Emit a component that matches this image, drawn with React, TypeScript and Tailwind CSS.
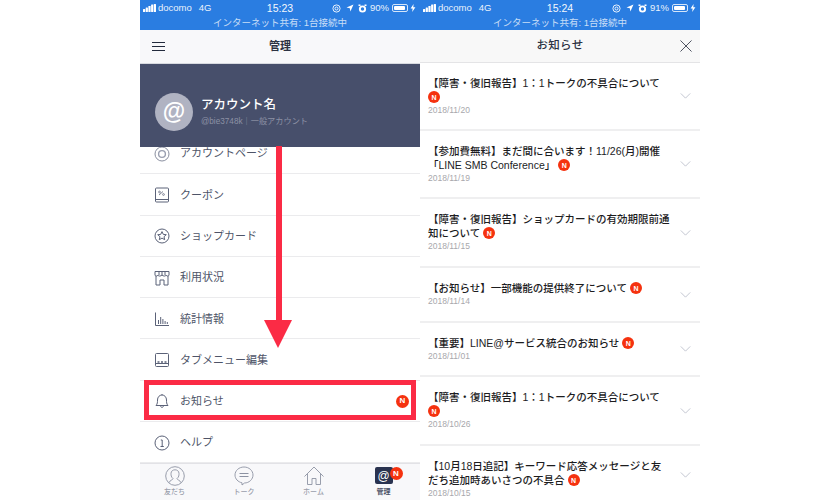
const FONT = "font-['Liberation_Sans','Noto_Sans_CJK_JP',sans-serif]";

function NBadge({ size = "small" }: { size?: "small" | "large" }) {
  return (
    <span
      className={`flex shrink-0 items-center justify-center rounded-full bg-[#f5320f] font-bold leading-none text-white ${
        size === "small" ? "h-[12px] w-[12px] text-[7px]" : "h-[13px] w-[13px] text-[8px]"
      }`}
    >
      N
    </span>
  );
}

function StatusBar({ time, battery }: { time: string; battery: string }) {
  return (
    <div className="h-[30px] shrink-0 bg-[#2a7de1] text-white">
      <div className="flex h-[16px] items-center px-[3px] text-[9.5px] leading-none">
        <div className="flex flex-1 items-center">
          <svg width="13" height="8" viewBox="0 0 13 8" className="mr-[2px]" fill="#fff">
            <rect x="0" y="5" width="2.2" height="3" rx="0.5" />
            <rect x="2.7" y="3.5" width="2.2" height="4.5" rx="0.5" />
            <rect x="5.4" y="2" width="2.2" height="6" rx="0.5" />
            <rect x="8.1" y="0.5" width="2.2" height="7.5" rx="0.5" />
            <rect x="10.8" y="0" width="2.2" height="8" rx="0.5" />
          </svg>
          <span className="opacity-90">docomo</span>
          <span className="ml-[7px] opacity-90">4G</span>
        </div>
        <span className="text-[10.5px] opacity-95">{time}</span>
        <div className="flex flex-1 items-center justify-end">
          <svg width="9" height="9" viewBox="0 0 9 9" fill="none" stroke="#fff">
            <circle cx="4.5" cy="4.5" r="3.6" strokeWidth="0.9" />
            <circle cx="4.5" cy="4.5" r="1.5" strokeWidth="0.9" />
          </svg>
          <svg width="8" height="8" viewBox="0 0 8 8" className="ml-[5px]" fill="#fff">
            <path d="M7.5 0.5 L0.5 3.6 L3.8 4.2 L4.4 7.5 Z" />
          </svg>
          <svg width="9" height="9" viewBox="0 0 9 9" className="ml-[4px]" fill="#fff">
            <circle cx="4.5" cy="5" r="3.6" />
            <circle cx="4.5" cy="5" r="1.7" fill="#2a7de1" />
            <rect x="0.5" y="0.5" width="2" height="1.5" />
            <rect x="6.5" y="0.5" width="2" height="1.5" />
          </svg>
          <span className="ml-[3px] opacity-90">{battery}</span>
          <span className="ml-[3px] flex h-[8px] w-[16px] items-center rounded-[2px] border border-white/80 p-[1px]">
            <span className="h-full w-[90%] rounded-[1px] bg-white" />
          </span>
          <svg width="6" height="8" viewBox="0 0 6 8" className="ml-[2px] mr-[1px]" fill="#fff">
            <path d="M3.6 0 L0.6 4.5 L2.6 4.5 L2.2 8 L5.4 3.3 L3.3 3.3 Z" />
          </svg>
        </div>
      </div>
      <div className="h-[14px] text-center text-[9.5px] leading-[13px] text-white/75">インターネット共有: 1台接続中</div>
    </div>
  );
}

const icon = {
  fill: "none",
  stroke: "#5b6278",
  strokeWidth: 1,
};

function MenuIcon({ name }: { name: string }) {
  return (
    <svg width="16" height="16" viewBox="0 0 16 16" {...icon}>
      {name === "account" && (
        <>
          <circle cx="8" cy="8" r="7" stroke="#8a8fa0" />
          <circle cx="8" cy="8" r="3.4" strokeWidth="1.4" stroke="#9a9fb0" />
        </>
      )}
      {name === "coupon" && (
        <>
          <rect x="1.5" y="1" width="13" height="14" rx="1" />
          <path d="M1.5 12.5 H14.5" />
          <path d="M5 8 L9 4.5" strokeWidth="0.8" />
          <circle cx="5.5" cy="5" r="0.9" strokeWidth="0.7" />
          <circle cx="9.5" cy="7.5" r="0.9" strokeWidth="0.7" />
        </>
      )}
      {name === "card" && (
        <>
          <circle cx="8" cy="8" r="7" />
          <path d="M8 3.6 L9.3 6.4 L12.3 6.7 L10 8.7 L10.7 11.7 L8 10.1 L5.3 11.7 L6 8.7 L3.7 6.7 L6.7 6.4 Z" />
        </>
      )}
      {name === "usage" && (
        <>
          <path d="M1 1.5 H15 V5 C15 6.4 12.4 6.4 12.2 5 C12 6.4 9 6.4 8 5 C7 6.4 4 6.4 3.8 5 C3.6 6.4 1 6.4 1 5 Z" />
          <path d="M5 1.5 V5 M8 1.5 V5 M11 1.5 V5" />
          <path d="M2 6 V15 H6 V10 H10 V15 H14 V6" />
        </>
      )}
      {name === "stats" && (
        <path d="M1.5 1.5 V14.5 H15 M4.5 13 V9 M6.7 13 V6 M8.9 13 V8 M11.1 13 V10 M13.3 13 V11" />
      )}
      {name === "tab" && (
        <>
          <rect x="1.5" y="1.5" width="13" height="13" rx="1" />
          <path d="M1.5 11.5 H14.5" />
          <path d="M3.5 10 H5.5 M7 10 H9 M10.5 10 H12.5" strokeWidth="1.4" />
        </>
      )}
      {name === "bell" && (
        <>
          <path d="M2 12.5 C3.5 11 3.5 9 3.5 7 C3.5 4 5.5 2 8 2 C10.5 2 12.5 4 12.5 7 C12.5 9 12.5 11 14 12.5 Z" />
          <path d="M6.5 12.5 C6.5 15 9.5 15 9.5 12.5" />
          <path d="M8 1 V2" />
        </>
      )}
      {name === "help" && (
        <>
          <circle cx="8" cy="8" r="7" />
          <path d="M6.8 5 H8.2 V11.5 M6.5 11.5 H9.8" />
        </>
      )}
    </svg>
  );
}

const MENU = [
  { name: "account", label: "アカウントページ" },
  { name: "coupon", label: "クーポン" },
  { name: "card", label: "ショップカード" },
  { name: "usage", label: "利用状況" },
  { name: "stats", label: "統計情報" },
  { name: "tab", label: "タブメニュー編集" },
  { name: "bell", label: "お知らせ", badge: true },
  { name: "help", label: "ヘルプ" },
];

const TABS = [
  { label: "友だち", name: "friends" },
  { label: "トーク", name: "talk" },
  { label: "ホーム", name: "home" },
];

function TabIcon({ name }: { name: string }) {
  return (
    <svg width="20" height="20" viewBox="0 0 20 20" fill="none" stroke="#8d93a3" strokeWidth="0.9">
      {name === "friends" && (
        <>
          <circle cx="10" cy="10" r="9.3" />
          <path d="M3.8 16.8 C5 14 8 14 8 12.5 C6 11 6 9 6 7.5 C6 5 8 3.8 10 3.8 C12 3.8 14 5 14 7.5 C14 9 14 11 12 12.5 C12 14 15 14 16.2 16.8" />
        </>
      )}
      {name === "talk" && (
        <>
          <path d="M10 1 C15 1 19 4.6 19 9 C19 13.4 15 17 10.5 17 L8 19 L8 16.8 C4 16 1 12.8 1 9 C1 4.6 5 1 10 1 Z" />
          <path d="M5.5 7.5 H14.5 M5.5 10.5 H14.5" strokeWidth="1.2" />
        </>
      )}
      {name === "home" && (
        <path d="M0.5 10.5 L10 1 L19.5 10.5 M3.5 8 V18.5 H8 V12.5 H12 V18.5 H16.5 V8" />
      )}
    </svg>
  );
}

function ManagePanel() {
  return (
    <div className="relative flex h-[500px] w-[280px] shrink-0 flex-col overflow-hidden bg-white">
      <StatusBar time="15:23" battery="90%" />
      <div className="relative flex h-[33px] shrink-0 items-center justify-center bg-[#f8f8fa]">
        <div className="absolute left-[12px] flex flex-col gap-[3px]">
          <span className="h-[1px] w-[13px] bg-[#222a3c]" />
          <span className="h-[1px] w-[13px] bg-[#222a3c]" />
          <span className="h-[1px] w-[13px] bg-[#222a3c]" />
        </div>
        <span className="text-[11px] font-bold text-[#2c3243]">管理</span>
      </div>
      <div className="z-10 flex h-[84px] shrink-0 items-center gap-[8px] border-t border-[#d8dae0] bg-[#474f6b] pl-[15px] pt-[12px]">
        <div className="flex h-[38px] w-[38px] items-center justify-center rounded-full bg-[#b0b3c2]">
          <span className="text-[23px] font-bold leading-none text-white">@</span>
        </div>
        <div className="flex flex-col">
          <span className="text-[12.5px] font-medium leading-[20px] text-white">アカウント名</span>
          <span className="text-[8.2px] leading-[14px] text-[#8c91a5]">@bie3748k｜一般アカウント</span>
        </div>
      </div>
      <div className="-mt-[14px] flex-1">
        {MENU.map((item) => (
          <div key={item.name} className="flex h-[41.3px] items-center border-b border-[#ebebed] pl-[14px] pr-[11px] pt-[1px]">
            <MenuIcon name={item.name} />
            <span className="ml-[10px] text-[11px] text-[#4e5468]">{item.label}</span>
            {item.badge && (
              <span className="ml-auto flex">
                <NBadge size="large" />
              </span>
            )}
          </div>
        ))}
      </div>
      <div className="flex h-[37px] shrink-0 items-start border-t border-[#e2e2e6] bg-[#f8f8fa] pt-[2px]">
        {TABS.map((tab) => (
          <div key={tab.name} className="-ml-[0.5px] flex w-[70px] flex-col items-center">
            <TabIcon name={tab.name} />
            <span className="mt-[1px] text-[7px] font-medium leading-[10px] text-[#9a9eab]">{tab.label}</span>
          </div>
        ))}
        <div className="relative flex w-[70px] flex-col items-center">
          <div className="mt-[1px] flex h-[17px] w-[18px] items-center justify-center rounded-[2px] bg-[#2a3350] text-[12px] leading-none text-white">
            @
          </div>
          <span className="absolute left-[41px] top-[1px] flex">
            <NBadge size="large" />
          </span>
          <span className="mt-[3px] text-[7px] font-bold leading-[10px] text-[#4e5468]">管理</span>
        </div>
      </div>

      {/* 注釈の矢印と赤枠 */}
      <div className="absolute left-[136px] top-[146px] z-20 h-[175px] w-[6px] bg-[#fb2b45]" />
      <div className="absolute left-[124px] top-[320px] z-20 h-0 w-0 border-x-[14.5px] border-t-[28px] border-x-transparent border-t-[#fb2b45]" />
      <div className="absolute left-[4px] top-[380px] z-20 h-[40px] w-[272px] border-[5px] border-[#fb2b45]" />
    </div>
  );
}

const NOTICES = [
  { lines: ["【障害・復旧報告】1：1トークの不具合について"], badgeOwnLine: true, date: "2018/11/20", h: 68 },
  { lines: ["【参加費無料】まだ間に合います！11/26(月)開催", "「LINE SMB Conference」"], date: "2018/11/19", h: 68 },
  { lines: ["【障害・復旧報告】ショップカードの有効期限前通", "知について"], date: "2018/11/15", h: 69 },
  { lines: ["【お知らせ】一部機能の提供終了について"], date: "2018/11/14", h: 55 },
  { lines: ["【重要】LINE@サービス統合のお知らせ"], date: "2018/11/01", h: 54 },
  { lines: ["【障害・復旧報告】1：1トークの不具合について"], badgeOwnLine: true, date: "2018/10/26", h: 69 },
  { lines: ["【10月18日追記】キーワード応答メッセージと友", "だち追加時あいさつの不具合"], date: "2018/10/15", h: 60 },
];

function NoticePanel() {
  return (
    <div className="flex h-[500px] w-[280px] shrink-0 flex-col overflow-hidden bg-white">
      <StatusBar time="15:24" battery="91%" />
      <div className="relative flex h-[33px] shrink-0 items-center justify-center border-b border-[#e4e4e6] bg-[#f8f8f8]">
        <span className="text-[11.5px] font-medium tracking-[0.3px] text-[#2c3243]">お知らせ</span>
        <svg width="12" height="12" viewBox="0 0 13 13" className="absolute right-[8px]" fill="none" stroke="#2c3243" strokeWidth="0.9">
          <path d="M0.5 0.5 L12.5 12.5 M12.5 0.5 L0.5 12.5" />
        </svg>
      </div>
      {NOTICES.map((notice, i) => (
        <div
          key={i}
          style={{ height: notice.h }}
          className="relative shrink-0 border-b-2 border-[#efeff0] pl-[8px] pr-[30px] pt-[13px]"
        >
          {notice.lines.map((line, j) => (
            <div
              key={j}
              className="flex items-center gap-[3px] whitespace-nowrap text-[10.5px] font-medium leading-[14px] text-[#1c1c1e]"
            >
              {line}
              {j === notice.lines.length - 1 && !notice.badgeOwnLine && <NBadge />}
            </div>
          ))}
          {notice.badgeOwnLine && (
            <div className="flex h-[14px] items-center">
              <NBadge />
            </div>
          )}
          <div className="text-[8.5px] leading-[13px] text-[#a8a8ac]">{notice.date}</div>
          <svg width="11" height="6" viewBox="0 0 12 7" className="absolute right-[9px] top-1/2 -translate-y-1/2" fill="none" stroke="#b9bdc9" strokeWidth="1">
            <path d="M0.5 0.5 L6 6 L11.5 0.5" />
          </svg>
        </div>
      ))}
    </div>
  );
}

export default function App() {
  return (
    <div className={`flex h-[500px] w-[840px] justify-center overflow-hidden bg-white ${FONT}`}>
      <ManagePanel />
      <NoticePanel />
    </div>
  );
}
